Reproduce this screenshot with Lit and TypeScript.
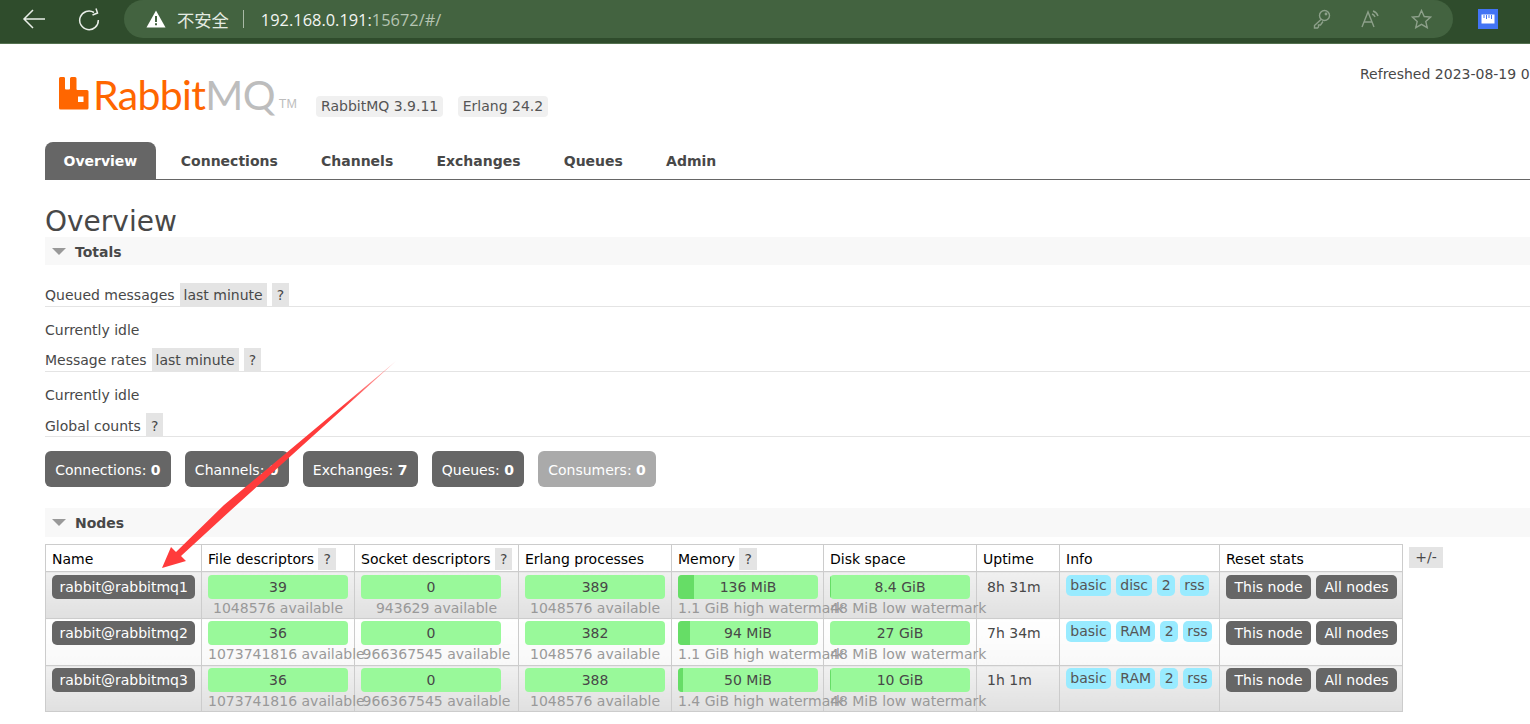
import { LitElement, html, css } from "lit";
import { customElement } from "lit/decorators.js";

interface NodeRow { name: string; fd: string; fdA: string; sd: string; sdA: string; ep: string; epA: string; mem: string; memW: number; memHi: string; disk: string; diskW: number; up: string; info: string[]; }
const nodes: NodeRow[] = [
  { name: "rabbit@rabbitmq1", fd: "39", fdA: "1048576 available", sd: "0", sdA: "943629 available", ep: "389", epA: "1048576 available", mem: "136 MiB", memW: 16, memHi: "1.1 GiB high watermark", disk: "8.4 GiB", diskW: 1, up: "8h 31m", info: ["basic", "disc", "2", "rss"] },
  { name: "rabbit@rabbitmq2", fd: "36", fdA: "1073741816 available", sd: "0", sdA: "966367545 available", ep: "382", epA: "1048576 available", mem: "94 MiB", memW: 12, memHi: "1.1 GiB high watermark", disk: "27 GiB", diskW: 0, up: "7h 34m", info: ["basic", "RAM", "2", "rss"] },
  { name: "rabbit@rabbitmq3", fd: "36", fdA: "1073741816 available", sd: "0", sdA: "966367545 available", ep: "388", epA: "1048576 available", mem: "50 MiB", memW: 5, memHi: "1.4 GiB high watermark", disk: "10 GiB", diskW: 1, up: "1h 1m", info: ["basic", "RAM", "2", "rss"] },
];

@customElement("app-root")
export class AppRoot extends LitElement {
  static styles = css`
    :host { display: block; width: 1530px; height: 724px; overflow: hidden; position: relative; background: #fff; font-family: "DejaVu Sans", Verdana, sans-serif; font-size: 14px; color: #484848; }
    .chrome { height: 44px; background: #2f4c2c; border-bottom: 1px solid #54714f; box-sizing: border-box; display: flex; align-items: flex-start; }
    .nav-ic { flex: none; display: block; }
    .back { margin: 8px 0 0 22px; }
    .reload { margin: 8px 0 0 32px; }
    .omni { margin-left: 24px; width: 1329px; height: 38px; background: #436340; border-radius: 19px; display: flex; align-items: center; padding-left: 22px; box-sizing: border-box; color: #e8efe6; font-family: "Noto Sans CJK SC", "Noto Sans", sans-serif; font-size: 17.3px; }
    .warn { margin-right: 11px; flex: none; }
    .insecure { color: #e4ebe2; }
    .sep { width: 1px; height: 18px; background: #a9b9a6; margin: 0 17px 0 14px; }
    .url { font-family: "Open Sans", sans-serif; font-size: 16.4px; color: #f2f5f1; }
    .url span { color: #b5c4b2; }
    .omni-right { margin-left: auto; display: flex; align-items: center; gap: 30px; padding-right: 21px; }
    .ext { margin: 9px 0 0 25px; width: 20px; height: 20px; background: #4274f4; display: flex; align-items: center; justify-content: center; }

    .page { padding-left: 45px; }
    .head { display: flex; align-items: flex-start; height: 98px; }
    .logo { display: flex; align-items: flex-start; margin: 30px 0 0 13px; width: 258px; flex: none; }
    .wordmark { font-family: "Lato", "Open Sans", sans-serif; font-weight: 400; font-size: 41px; line-height: 42px; color: #ff6600; white-space: nowrap; margin-left: 3px; letter-spacing: -0.66px; }
    .wordmark span { color: #bdbdbd; }
    .tm { font-family: "Liberation Sans", sans-serif; font-size: 12.5px; color: #bdbdbd; margin: 23px 0 0 4px; }
    .ver { margin-top: 52px; background: #f0f0f0; border-radius: 4px; height: 21px; line-height: 21px; padding: 0 5px; font-size: 14px; color: #555; white-space: nowrap; }
    .ver + .ver { margin-left: 15px; padding: 0 4.5px; }
    .refreshed { margin-left: auto; margin-top: 22px; width: 170px; overflow: hidden; white-space: nowrap; font-size: 14px; color: #484848; }

    .tabs { display: flex; height: 38px; border-bottom: 1px solid #666; box-sizing: border-box; }
    .tab { padding: 0 18px; margin-right: 7.2px; line-height: 38px; font-weight: 700; font-size: 14px; color: #484848; }
    .tab.on { background: #666; color: #fff; border-radius: 8px 8px 0 0; padding: 0 18.5px; margin-right: 7px; }

    h1 { margin: 26px 0 -1px; font-weight: 400; font-size: 28px; line-height: 32px; color: #484848; }
    .sec { height: 28px; padding-top: 1px; box-sizing: border-box; background: #f8f8f8; display: flex; align-items: center; font-weight: 700; font-size: 14px; color: #484848; }
    .tri { width: 0; height: 0; border-left: 7px solid transparent; border-right: 7px solid transparent; border-top: 7px solid #999; margin: 0 9px 0 7px; }
    .sub { display: flex; align-items: stretch; height: 23px; border-bottom: 1px solid #e4e4e4; line-height: 24px; }
    .sub.first { margin-top: 18px; }
    .sub.low { line-height: 26px; }
    .pill { background: #e4e4e4; padding: 0 4px; margin-left: 5px; }
    .pill.qm { padding: 0 5px; }
    .idle { height: 41px; padding-top: 13px; box-sizing: border-box; line-height: 20px; }
    .counters { display: flex; gap: 14px; margin-top: 14px; }
    .cnt { height: 36px; line-height: 38px; background: #666; color: #fff; border-radius: 6px; padding: 0 10.15px; white-space: nowrap; }
    .cnt b { font-weight: 700; }
    .cnt.dim { background: #aaa; }
    .sec.nodes { margin-top: 21px; height: 29px; padding-top: 0; }
    .tw { display: flex; align-items: flex-start; margin-top: 7px; }
    table { border-collapse: collapse; table-layout: fixed; width: 1357px; border: 1px solid #ccc; flex: none; box-sizing: border-box; }
    th { font-weight: 400; text-align: left; height: 27px; padding: 1px 0 0 6px; border: 1px solid #ccc; color: #000; white-space: nowrap; background: #fff; box-sizing: border-box; }
    td { vertical-align: top; padding: 3px 6px 0; border: 1px solid #ccc; height: 47px; box-sizing: border-box; text-align: center; }
    tr + tr td { padding-top: 2px; }
    tr:last-child td { height: 46px; }
    tr.odd td { background: linear-gradient(#f0f0f0, #e0e0e0); }
    tr.even td { background: linear-gradient(#ffffff, #f8f8f8); }
    .q { display: inline-block; background: #e4e4e4; padding: 0 5px; height: 22px; line-height: 22px; color: #484848; }
    .plus { flex: none; margin: 3px 0 0 6px; background: #e4e4e4; width: 34px; height: 21px; line-height: 21px; text-align: center; color: #484848; }
    .btn { display: inline-block; background: #666; color: #fff; border-radius: 5px; height: 24px; line-height: 24px; padding: 0 8.5px; white-space: nowrap; }
    .btn.name { padding: 0 7.5px; }
    .bar { width: 140px; height: 24px; background: #99f99a; border-radius: 4px; position: relative; overflow: hidden; line-height: 24px; text-align: center; color: #484848; }
    .fill { position: absolute; left: 0; top: 0; bottom: 0; background: #66dd66; }
    .bar span { position: relative; }
    .avail { color: #999; white-space: nowrap; line-height: 18px; text-align: center; }
    .up { text-align: left; padding-left: 4px; line-height: 24px; color: #484848; }
    .info { display: flex; gap: 5px; white-space: nowrap; }
    .tag { background: #99ebff; border-radius: 5px; height: 21px; line-height: 21px; padding: 0 4.3px; color: #555; }
    .reset { display: flex; gap: 5px; }
    .arrow { position: absolute; left: 0; top: 0; pointer-events: none; }
  `;

  q() { return html`<span class="q">?</span>`; }

  bar(v: string, fill = 0) {
    return html`<div class="bar">${fill ? html`<div class="fill" style="width:${fill}px"></div>` : ""}<span>${v}</span></div>`;
  }

  render() {
    return html`
      <div class="chrome">
        <svg class="nav-ic back" width="24" height="22" viewBox="0 0 24 22" fill="none" stroke="#e9eee8" stroke-width="1.5"><path d="M23 11H2M11 2l-9 9 9 9"/></svg>
        <svg class="nav-ic reload" width="22" height="24" viewBox="0 0 22 24" fill="none" stroke="#e9eee8" stroke-width="1.5"><path d="M16 4.500A9.300 9.300 0 1 0 20.300 12"/><path d="M18 0.500l1.500 4.500L14.500 7"/></svg>
        <div class="omni">
          <svg class="warn" width="20" height="18" viewBox="0 0 20 18"><path fill="#fff" d="M10 0.500 19.500 17.500H.5z"/><path fill="#436340" d="M9 6h2v6H9zM9 13.300h2v2H9z"/></svg>
          <span class="insecure">不安全</span><span class="sep"></span>
          <span class="url">192.168.0.191:<span>15672/#/</span></span>
          <div class="omni-right">
            <svg width="18" height="20" viewBox="0 0 18 20" fill="none" stroke="#8da08a" stroke-width="1.4"><circle cx="11.500" cy="6.500" r="5"/><circle cx="13" cy="5" r=".7"/><path d="M8 10.500 1.500 16.500v2.500h3l1-1v-2h2l2.500-3.500"/></svg>
            <svg width="20" height="20" viewBox="0 0 20 20" fill="none" stroke="#8da08a" stroke-width="1.4"><path d="M1 18 7 3l6 15M3 13h8"/><path d="M11 5a5 5 0 0 1 3 3M12 2a8 8 0 0 1 5 5"/></svg>
            <svg width="21" height="20" viewBox="0 0 21 20" fill="none" stroke="#8da08a" stroke-width="1.4"><path d="M10.500 1.500l2.700 6 6.400.6-4.800 4.300 1.400 6.300-5.700-3.300-5.700 3.300 1.400-6.300L1.400 8.100l6.400-.6z"/></svg>
          </div>
        </div>
        <div class="ext"><svg width="14" height="10" viewBox="0 0 14 10"><rect x=".5" y=".5" width="13" height="9" fill="#fff"/><path d="M3 1v3M5.500 1v4M8 1v3M10.500 1v4" stroke="#4274f4" stroke-width="1"/></svg></div>
      </div>
      <div class="page">
        <div class="head">
          <div class="logo">
            <svg width="32" height="33" viewBox="0 0 32 33" style="flex:none;margin-top:3px"><path fill="#ff6600" fill-rule="evenodd" d="M1 1.500Q1 0 2.500 0H6q1 0 1 1.500V11.500q0 1 1 1h3q1 0 1-1V1.500Q12 0 13.500 0H17q1.500 0 1.500 1.500V12q0 1 1 1h9.500q1.500 0 1.500 1.500V31q0 1.500-1.500 1.500H2.500Q1 32.500 1 31zM20 19.500v5.500h5.500v-5.500z"/></svg>
            <span class="wordmark">Rabbit<span>MQ</span></span>
            <span class="tm">TM</span>
          </div>
          <span class="ver">RabbitMQ 3.9.11</span>
          <span class="ver">Erlang 24.2</span>
          <span class="refreshed">Refreshed 2023-08-19 05:11:01</span>
        </div>
        <div class="tabs">
          <span class="tab on">Overview</span>
          <span class="tab">Connections</span>
          <span class="tab">Channels</span>
          <span class="tab">Exchanges</span>
          <span class="tab">Queues</span>
          <span class="tab">Admin</span>
        </div>
        <h1>Overview</h1>
        <div class="sec"><span class="tri"></span>Totals</div>
        <div class="sub first">Queued messages<span class="pill">last minute</span><span class="pill qm">?</span></div>
        <div class="idle">Currently idle</div>
        <div class="sub">Message rates<span class="pill">last minute</span><span class="pill qm">?</span></div>
        <div class="idle">Currently idle</div>
        <div class="sub low">Global counts<span class="pill qm">?</span></div>
        <div class="counters">
          <span class="cnt">Connections: <b>0</b></span>
          <span class="cnt">Channels: <b>0</b></span>
          <span class="cnt">Exchanges: <b>7</b></span>
          <span class="cnt">Queues: <b>0</b></span>
          <span class="cnt dim">Consumers: <b>0</b></span>
        </div>
        <div class="sec nodes"><span class="tri"></span>Nodes</div>
        <div class="tw">
          <table>
            <colgroup>
              <col style="width:156px"/><col style="width:153px"/><col style="width:164px"/><col style="width:153px"/><col style="width:152px"/><col style="width:153px"/><col style="width:83px"/><col style="width:160px"/><col style="width:183px"/>
            </colgroup>
            <thead><tr>
              <th>Name</th><th>File descriptors ${this.q()}</th><th>Socket descriptors ${this.q()}</th><th>Erlang processes</th><th>Memory ${this.q()}</th><th>Disk space</th><th>Uptime</th><th>Info</th><th>Reset stats</th>
            </tr></thead>
            <tbody>
              ${nodes.map((n, i) => html`
                <tr class="${i % 2 ? "even" : "odd"}">
                  <td><span class="btn name">${n.name}</span></td>
                  <td>${this.bar(n.fd)}<div class="avail">${n.fdA}</div></td>
                  <td>${this.bar(n.sd)}<div class="avail">${n.sdA}</div></td>
                  <td>${this.bar(n.ep)}<div class="avail">${n.epA}</div></td>
                  <td>${this.bar(n.mem, n.memW)}<div class="avail">${n.memHi}</div></td>
                  <td>${this.bar(n.disk, n.diskW)}<div class="avail">48 MiB low watermark</div></td>
                  <td><div class="up">${n.up}</div></td>
                  <td><div class="info">${n.info.map((t) => html`<span class="tag">${t}</span>`)}</div></td>
                  <td><div class="reset"><span class="btn">This node</span><span class="btn">All nodes</span></div></td>
                </tr>`)}
            </tbody>
          </table>
          <span class="plus">+/-</span>
        </div>
      </div>
      <svg class="arrow" width="1530" height="724" viewBox="0 0 1530 724">
        <defs><linearGradient id="ag" gradientUnits="userSpaceOnUse" x1="396" y1="361" x2="345" y2="407"><stop offset="0" stop-color="#ff3b3b" stop-opacity=".3"/><stop offset="1" stop-color="#ff3b3b"/></linearGradient></defs>
        <polygon fill="url(#ag)" points="396,361 230,511 181,556 186,561 162,568 171,547 176,552 224,505"/>
      </svg>
    `;
  }
}
